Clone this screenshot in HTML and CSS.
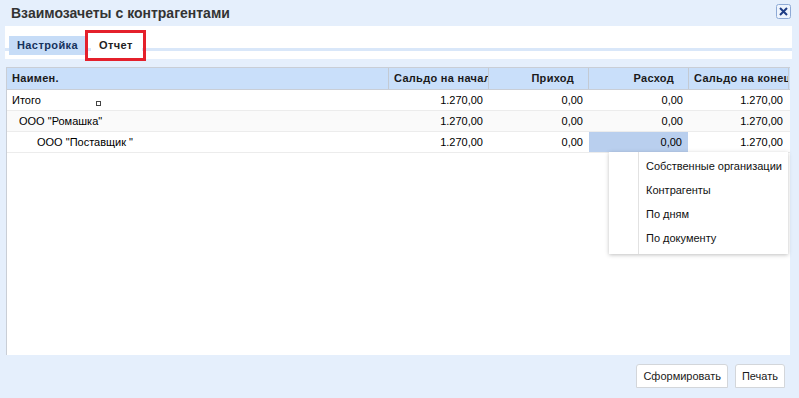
FILE: index.html
```html
<!DOCTYPE html>
<html lang="ru">
<head>
    <meta charset="UTF-8">
    <title>Взаимозачеты с контрагентами</title>
    <link rel="stylesheet" href="styles.css">
</head>
<body>
    <div class="window">
        <div class="titlebar">
            <span class="title">Взаимозачеты с контрагентами</span>
            <span class="close">
                <svg width="15" height="15" viewBox="0 0 15 15">
                    <rect x="0.5" y="0.5" width="14" height="14" rx="2" fill="#eef4fd" stroke="#8eaad6"/>
                    <path d="M4 4 L11 11 M11 4 L4 11" stroke="#1f3d86" stroke-width="2"/>
                </svg>
            </span>
        </div>

        <div class="tabs">
            <div class="tab-strip">
                <div class="tab">Настройка</div>
                <div class="tab active">Отчет</div>
            </div>
            <div class="highlight"></div>
        </div>

        <div class="grid">
            <div class="grid-row grid-header">
                <div class="cell left">Наимен.</div>
                <div class="cell">Сальдо на начало</div>
                <div class="cell">Приход</div>
                <div class="cell">Расход</div>
                <div class="cell">Сальдо на конец</div>
                <div class="cell filler"></div>
            </div>

            <div class="grid-row">
                <div class="cell left">Итого<span class="marker"></span></div>
                <div class="cell">1.270,00</div>
                <div class="cell">0,00</div>
                <div class="cell">0,00</div>
                <div class="cell">1.270,00</div>
                <div class="cell filler"></div>
            </div>
            <div class="grid-row alt">
                <div class="cell left level-1">ООО "Ромашка"</div>
                <div class="cell">1.270,00</div>
                <div class="cell">0,00</div>
                <div class="cell">0,00</div>
                <div class="cell">1.270,00</div>
                <div class="cell filler"></div>
            </div>
            <div class="grid-row">
                <div class="cell left level-2">ООО "Поставщик "</div>
                <div class="cell">1.270,00</div>
                <div class="cell">0,00</div>
                <div class="cell selected">0,00</div>
                <div class="cell">1.270,00</div>
                <div class="cell filler"></div>
            </div>

            <div class="menu">
                <div class="menu-item">Собственные организации</div>
                <div class="menu-item">Контрагенты</div>
                <div class="menu-item">По дням</div>
                <div class="menu-item">По документу</div>
            </div>
        </div>

        <div class="footer">
            <button class="btn">Сформировать</button>
            <button class="btn">Печать</button>
        </div>
    </div>
</body>
</html>
```

FILE: styles.css
```css
html, body {
    height: 100%;
    overflow: hidden;
}

body {
    margin: 0;
    padding: 0;
    background: #e5effc;
    font-family: "Liberation Sans", Arial, sans-serif;
    color: #000;
}

.window {
    height: 398px;
    display: flex;
    flex-direction: column;
}

.titlebar {
    height: 26px;
    padding: 0 8px 0 11px;
    display: flex;
    align-items: center;
    justify-content: space-between;
}

.title {
    font-size: 14px;
    font-weight: bold;
    color: #333;
}

.close {
    display: flex;
    margin-top: -4px;
}

.tabs {
    position: relative;
    height: 33px;
    margin: 0 7px 8px 5px;
    background: linear-gradient(#fff 22px, #d9e7f9 22px, #d9e7f9 25px, #fff 25px);
}

.tab-strip {
    display: flex;
    gap: 5px;
    padding: 10px 0 0 4px;
}

.tab {
    height: 19px;
    line-height: 18px;
    padding: 0 8px;
    font-size: 11px;
    font-weight: bold;
    color: #15325c;
    background: #c6dcf7;
    letter-spacing: 0.4px;
}

.tab.active {
    background: #fff;
    color: #222;
    padding: 0 9px 0 8px;
}

.highlight {
    position: absolute;
    left: 80px;
    top: 4px;
    width: 55px;
    height: 25px;
    border: 3px solid #e4202b;
}

.grid {
    position: relative;
    height: 287px;
    margin: 0 9px 0 6px;
    background: #fff;
    border-left: 1px solid #c9ced6;
    border-top: 1px solid #c9ced6;
}

.grid-row {
    display: grid;
    grid-template-columns: 382px 100px 100px 100px 100px 1fr;
    height: 20px;
    border-bottom: 1px solid #ececec;
    font-size: 11px;
}

.grid-row.alt {
    background: #fafafa;
}

.cell {
    position: relative;
    line-height: 20px;
    padding: 0 6px 0 5px;
    text-align: right;
    white-space: nowrap;
    overflow: hidden;
}

.cell.left {
    text-align: left;
}

.cell.level-1 {
    padding-left: 12px;
}

.cell.level-2 {
    padding-left: 30px;
}

.cell.selected {
    background: #b9cfee;
    margin-right: 1px;
}

.grid-header {
    height: 21px;
    background: #c9dffa;
    border-bottom: 1px solid #c9ced6;
    font-weight: bold;
    color: #1a1a1a;
    letter-spacing: 0.3px;
}

.grid-header .cell {
    line-height: 21px;
    padding-right: 14px;
    border-right: 1px solid #c3cad3;
}

.grid-header .cell.filler {
    border-right: none;
}

.marker {
    position: absolute;
    left: 89px;
    top: 11px;
    width: 3px;
    height: 3px;
    border: 1px solid #444;
    background: #fff;
}

.menu {
    position: absolute;
    left: 602px;
    top: 84px;
    width: 179px;
    padding: 2px 0 4px;
    background: #fff;
    box-shadow: 0 1px 4px rgba(0, 0, 0, 0.25);
    background-image: linear-gradient(90deg, transparent 29px, #e2e2e2 29px, #e2e2e2 30px, transparent 30px);
}

.menu-item {
    height: 24px;
    line-height: 24px;
    padding-left: 37px;
    font-size: 11px;
    color: #111;
    white-space: nowrap;
}

.footer {
    display: flex;
    justify-content: flex-end;
    gap: 7px;
    padding: 9px 14px 0 0;
}

.btn {
    height: 24px;
    padding: 0 6px;
    font-family: "Liberation Sans", Arial, sans-serif;
    font-size: 11px;
    color: #1a1a1a;
    background: #fff;
    border: 1px solid #d3d6da;
    border-radius: 3px 3px 0 0;
}
```
